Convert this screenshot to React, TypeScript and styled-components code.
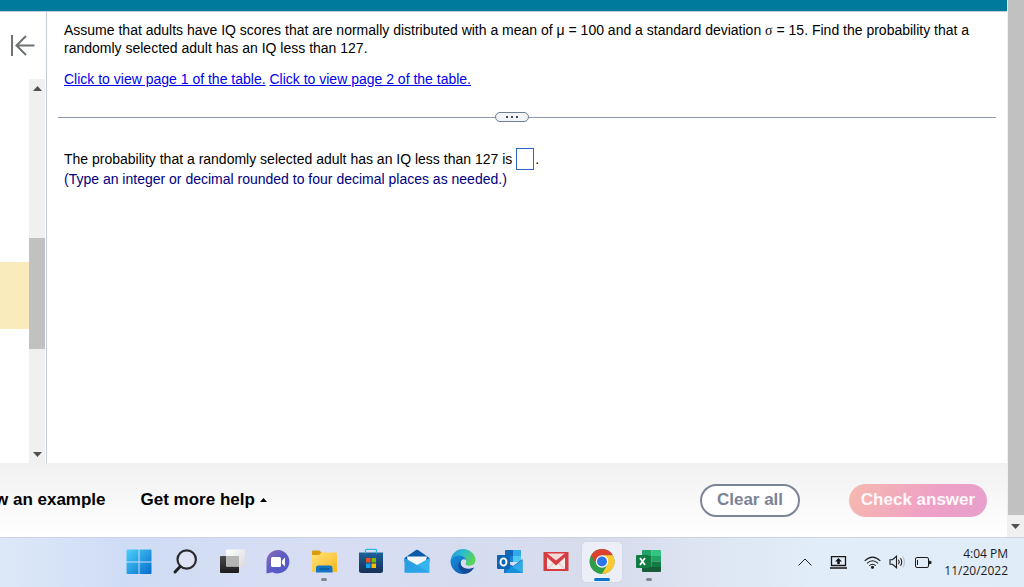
import React from "react";
import styled, { createGlobalStyle } from "styled-components";

const GlobalStyle = createGlobalStyle`
  *, *::before, *::after { box-sizing: border-box; }
  body {
    margin: 0;
    background: #fff;
    color: #000;
    font-family: "Liberation Sans", Arial, sans-serif;
    font-size: 14px;
  }
  button { font: inherit; color: inherit; padding: 0; border: 0; background: none; cursor: pointer; }
`;

const Screen = styled.div`
  display: flex;
  flex-direction: column;
  min-height: 100vh;
  overflow-x: hidden;
`;

const Browser = styled.div`
  flex: 1;
  display: flex;
`;

const Page = styled.div`
  flex: 1;
  min-width: 0;
  display: flex;
  flex-direction: column;
`;

const TopBar = styled.header`
  height: 12px;
  background: #007a9c;
  border-bottom: 1px solid #c3ccdb;
`;

const Workspace = styled.div`
  flex: 1;
  display: flex;
`;

const Rail = styled.aside`
  width: 47px;
  display: flex;
  flex-direction: column;
  border-right: 1px solid #c3ccdb;
`;

const CollapseButton = styled.button`
  height: 67px;
  padding-left: 10px;
  display: flex;
  align-items: center;
`;

const RailBody = styled.div`
  flex: 1;
  display: flex;
  padding-right: 1px;
`;

const QuestionList = styled.div`
  flex: 1;
  display: flex;
  flex-direction: column;
  padding-top: 183px;
`;

const CurrentQuestion = styled.div`
  height: 67px;
  background: #f9ebbb;
`;

const Track = styled.div<{ $width: number }>`
  width: ${(p) => p.$width}px;
  display: flex;
  flex-direction: column;
  align-items: center;
  justify-content: space-between;
  background: #f0f0f0;
`;

const Thumb = styled.div<{ $before: number; $size?: number }>`
  width: 16px;
  margin-top: ${(p) => p.$before}px;
  margin-bottom: auto;
  ${(p) => (p.$size ? `height: ${p.$size}px;` : "flex: 1; margin-bottom: 0;")}
  background: #c1c1c1;
`;

const ScrollButton = styled.button<{ $height: number }>`
  width: 100%;
  height: ${(p) => p.$height}px;
  display: flex;
  align-items: center;
  justify-content: center;
`;

const Exercise = styled.main`
  flex: 1;
  min-width: 0;
  padding: 9px 11px 0;
`;

const Block = styled.section`
  padding-left: 6px;
`;

const Paragraph = styled.p`
  margin: 0;
  line-height: 18px;
`;

const Sigma = styled.span`
  font-family: "Liberation Serif", "Times New Roman", serif;
  line-height: 1;
`;

const TableLinks = styled.p`
  margin: 12px 0 0;
  line-height: 20px;
`;

const TableLink = styled.a`
  color: #0000ee;
`;

const Divider = styled.div`
  display: flex;
  align-items: center;
  height: 10px;
  margin: 23px 0 26px;

  &::before,
  &::after {
    content: "";
    flex: 1;
    height: 1px;
    background: #8e99ac;
  }
  &::before { flex: 0 0 calc(50% - 32px); }
`;

const DividerHandle = styled.button`
  width: 34px;
  height: 10px;
  display: flex;
  align-items: center;
  justify-content: center;
  gap: 3px;
  border: 1px solid #6d7d90;
  border-radius: 5px;
  background: #f3f5f8;
`;

const Dot = styled.span`
  width: 2px;
  height: 2px;
  background: #3f4a5a;
`;

const AnswerLine = styled.label`
  display: flex;
  align-items: center;
  height: 22px;
  white-space: pre;
`;

const AnswerInput = styled.input`
  width: 18px;
  height: 22px;
  margin-right: 1px;
  padding: 0;
  border: 1px solid #2f66c4;
  border-radius: 0;
  background: #fff;
  font: inherit;
  text-align: center;
`;

const Instruction = styled.p`
  margin: 0;
  line-height: 18px;
  color: #000080;
`;

const Footer = styled.footer`
  display: flex;
  align-items: center;
  height: 74px;
  padding-right: 20px;
  background: linear-gradient(#f1f1f1, #fff);
  font-size: 17px;
  font-weight: bold;
`;

const FooterLinks = styled.div`
  display: flex;
  gap: 35px;
  margin-left: -5px;
`;

const FooterLink = styled.button`
  display: flex;
  align-items: center;
  gap: 5px;
  white-space: nowrap;
`;

const Spacer = styled.div`
  flex: 1;
`;

const Pill = styled.button<{ $primary?: boolean }>`
  height: 33px;
  border-radius: 17px;
  white-space: nowrap;
  ${(p) =>
    p.$primary
      ? `
    width: 138px;
    margin-left: 49px;
    color: #fff8fb;
    background: linear-gradient(115deg, #f5b8b0 5%, #efa0c6 60%, #e6a0cc);
  `
      : `
    width: 100px;
    color: #7b8396;
    border: 2px solid #7b8396;
    background: #fff;
  `}
`;

const Taskbar = styled.nav`
  display: flex;
  align-items: center;
  justify-content: space-between;
  height: 50px;
  padding: 0 16px 1px 116px;
  border-top: 1px solid #ccd3e2;
  background: linear-gradient(90deg, #dde9f8 0%, #cfdcf5 12%, #d7def3 30%, #d6dcf0 45%, #d8dcec 60%, #dfe8f5 72%, #e1edf8 80%, #e0ecf7 100%);
  font-family: "Open Sans", "Segoe UI", sans-serif;
  font-size: 12px;
`;

const AppStrip = styled.div`
  display: grid;
  grid-template-columns: repeat(12, 1fr);
  justify-items: center;
  width: 556px;
`;

const AppButton = styled.button<{ $active?: boolean; $mark?: boolean }>`
  width: 40px;
  height: 40px;
  display: flex;
  flex-direction: column;
  align-items: center;
  padding-top: 6px;
  border-radius: 4px;
  background: ${(p) => (p.$active ? "#eceff8" : "none")};
  box-shadow: ${(p) => (p.$active ? "0 0 1px #aab2c6" : "none")};

  &::after {
    content: "";
    width: ${(p) => (p.$active ? 16 : 6)}px;
    height: 3px;
    margin-top: 2px;
    border-radius: 2px;
    background: ${(p) => (p.$active ? "#0a74d1" : p.$mark ? "#83868f" : "transparent")};
  }
`;

const Tray = styled.div`
  display: flex;
  align-items: center;
`;

const TrayButton = styled.button<{ $gap: number }>`
  display: flex;
  margin-right: ${(p) => p.$gap}px;
`;

const Clock = styled.button`
  display: flex;
  flex-direction: column;
  align-items: flex-end;
  line-height: 17px;
  color: #1b1b1b;
`;

const Arrow = ({ up = false, color = "#505050", width = 9 }: { up?: boolean; color?: string; width?: number }) => (
  <svg width={width} height={width > 8 ? 5 : 4} viewBox="0 0 10 5" preserveAspectRatio="none" aria-hidden="true">
    <path d={up ? "M0 5L5 0L10 5Z" : "M0 0L5 5L10 0Z"} fill={color} />
  </svg>
);

const Icon = ({ children }: { children: React.ReactNode }) => (
  <svg width="28" height="28" viewBox="0 0 28 28" aria-hidden="true">
    {children}
  </svg>
);

const StartIcon = () => (
  <Icon>
    <defs>
      <linearGradient id="start" gradientUnits="userSpaceOnUse" x1="1" y1="1" x2="27" y2="27">
        <stop offset="0" stopColor="#50d3fb" />
        <stop offset="1" stopColor="#0069cc" />
      </linearGradient>
    </defs>
    <path fill="url(#start)" d="M2.500 1.500H13.500V13.500H1.500V2.500A1 1 0 0 1 2.500 1.500ZM14.500 1.500H25.500A1 1 0 0 1 26.500 2.500V13.500H14.500ZM1.500 14.500H13.500V26H2.500A1 1 0 0 1 1.500 25ZM14.500 14.500H26.500V25A1 1 0 0 1 25.500 26H14.500Z" />
  </Icon>
);

const SearchIcon = () => (
  <Icon>
    <circle cx="15.700" cy="11.500" r="9.200" fill="#e6eaf5" fillOpacity=".6" stroke="#2a2a2c" strokeWidth="2.200" />
    <path d="M9.200 18.500L4 24" stroke="#202022" strokeWidth="3" strokeLinecap="round" />
  </Icon>
);

const TaskViewIcon = () => (
  <Icon>
    <defs>
      <linearGradient id="tvDark" x2="0" y2="1">
        <stop stopColor="#4a4a4a" />
        <stop offset="1" stopColor="#1c1c1c" />
      </linearGradient>
      <linearGradient id="tvLight" x2="1" y2="1">
        <stop stopColor="#fff" />
        <stop offset="1" stopColor="#d8d9dc" />
      </linearGradient>
    </defs>
    <rect x="2" y="8" width="19" height="17" rx="1" fill="url(#tvDark)" />
    <rect x="8" y="1.500" width="19" height="17" rx="1" fill="url(#tvLight)" />
    <path d="M8 8H21V18.500H8Z" fill="#b5b5b6" />
  </Icon>
);

const ChatIcon = () => (
  <Icon>
    <defs>
      <linearGradient id="chat" x2="1" y2="1">
        <stop stopColor="#8f6db4" />
        <stop offset=".5" stopColor="#5d5bc6" />
        <stop offset="1" stopColor="#5059c9" />
      </linearGradient>
    </defs>
    <path d="M14 2A11.700 11.700 0 1 1 8.500 24.200L2.500 25.500V14A11.700 11.700 0 0 1 14 2Z" fill="url(#chat)" />
    <rect x="7" y="9" width="10" height="10" rx="1.500" fill="#fff" />
    <path d="M18 12.500L21 9.500V18.500L18 15.500Z" fill="#fff" />
  </Icon>
);

const FolderIcon = () => (
  <Icon>
    <defs>
      <linearGradient id="folder" x2="1" y2="1">
        <stop stopColor="#ffe27a" />
        <stop offset="1" stopColor="#f8b91c" />
      </linearGradient>
    </defs>
    <path d="M2 3.500A1 1 0 0 1 3 2.500H9.500L12 5V10H2Z" fill="#dd9c0c" />
    <path d="M2 7H9L11.500 4.500H26A1 1 0 0 1 27 5.500V24H2Z" fill="url(#folder)" />
    <path d="M6 24.500V20A2.500 2.500 0 0 1 8.500 17.500H20A2.500 2.500 0 0 1 22.500 20V24.500Z" fill="#1474c4" />
    <path d="M9.500 21H19" stroke="#0b4e8d" strokeWidth="1" />
  </Icon>
);

const StoreIcon = () => (
  <Icon>
    <defs>
      <linearGradient id="store" x2="0" y2="1">
        <stop stopColor="#1b619a" />
        <stop offset="1" stopColor="#173057" />
      </linearGradient>
    </defs>
    <path d="M2 4.500H26V22.500A2.500 2.500 0 0 1 23.500 25H4.500A2.500 2.500 0 0 1 2 22.500Z" fill="url(#store)" />
    <path d="M8.500 5.500V2.200A.8.800 0 0 1 9.300 1.400H18.700A.8.800 0 0 1 19.500 2.200V5.500" fill="none" stroke="#30b7ea" strokeWidth="1.300" />
    <path d="M9 10H13.500V14.500H9Z" fill="#f25022" />
    <path d="M14.500 10H19V14.500H14.500Z" fill="#7fba00" />
    <path d="M9 15.500H13.500V20H9Z" fill="#10a5ee" />
    <path d="M14.500 15.500H19V20H14.500Z" fill="#ffb900" />
  </Icon>
);

const MailIcon = () => (
  <Icon>
    <path d="M1.500 10L13 2A2 2 0 0 1 15 2L26.500 10V14H1.500Z" fill="#0a5aa8" />
    <path d="M4 8.500H24L22 16L14 19L5 15Z" fill="#f5f7fb" />
    <path d="M1.500 10L14 17L26.500 24.500H1.500Z" fill="#2a9fe4" />
    <path d="M26.500 10L14 17L1.500 24.500H26.500Z" fill="#35b5f0" />
    <path d="M14 17L26.500 24.500H1.500Z" fill="#1b8cd8" fillOpacity=".4" />
  </Icon>
);

const EdgeIcon = () => (
  <Icon>
    <defs>
      <linearGradient id="edgeTop" x2="1" y2=".4">
        <stop stopColor="#2493df" />
        <stop offset=".5" stopColor="#2bbccc" />
        <stop offset="1" stopColor="#5bd35c" />
      </linearGradient>
      <linearGradient id="edgeSide" x2=".7" y2="1">
        <stop stopColor="#1690df" />
        <stop offset="1" stopColor="#0c5fb2" />
      </linearGradient>
    </defs>
    <path d="M1.500 12.500C3 8 6.500 7 10 7C14 7 17 9.500 17.300 12C13 9.500 10.500 14 12 17.500C13.500 21.500 20 22 25 19.500C22.500 24 18.500 26 14 26C7 26 1.200 20 1.500 12.500Z" fill="url(#edgeSide)" />
    <path d="M1.600 12.500C2.500 5.500 7.700 1 14 1C21 1 26.500 6.500 26.500 12C26.500 16 23.500 17.700 20.500 17.700C17.500 17.700 16 16.500 16.800 15.200C18.500 12 15.500 7.500 10 7.500C6 7.500 3 9.500 1.600 12.500Z" fill="url(#edgeTop)" />
    <path d="M11.500 12C7 17 10 24.500 17 25.500C20.500 24.700 23.500 22.500 25 19.500C20 22 13.500 20.500 12 17C11.200 15 11.300 13.500 11.500 12Z" fill="#154b96" />
  </Icon>
);

const OutlookIcon = () => (
  <Icon>
    <path d="M9 3A1 1 0 0 1 10 2H25V14H9Z" fill="#1067b5" />
    <path d="M17 2H25V8H17Z" fill="#31a8ea" />
    <path d="M9 8H17V14H9Z" fill="#1682d2" />
    <path d="M17 8H25V14H17Z" fill="#50c8f2" />
    <path d="M8 13L17 18L26.500 11V25H8Z" fill="#1c75c4" />
    <path d="M26.500 12V25H10L18 18Z" fill="#30a9e8" />
    <path d="M14 18L26.500 25H10Z" fill="#1790dc" />
    <rect x="1" y="7" width="13" height="14" rx="1" fill="#0b65b6" />
    <ellipse cx="7.500" cy="14" rx="3" ry="3.600" fill="none" stroke="#fff" strokeWidth="1.900" />
  </Icon>
);

const GmailIcon = () => (
  <Icon>
    <rect x="1.500" y="4" width="25" height="19" fill="#d53d41" />
    <path d="M5 7.500L14 16L23 7.500V21H5Z" fill="#f5eded" />
    <path d="M5.500 21L11.500 15M22.500 21L16.500 15" stroke="#e5aeb0" strokeWidth="1" />
    <path d="M5 5.500H23L14 12.500Z" fill="#f3d9da" />
    <path d="M3 5.500L14 15.500L25 5.500" fill="none" stroke="#d53d41" strokeWidth="3" />
  </Icon>
);

const ChromeIcon = () => (
  <Icon>
    <circle cx="14" cy="13.500" r="12.500" fill="#2e9e4c" />
    <path d="M3.200 7.200A12.500 12.500 0 0 1 24.900 7.200H14L8.600 16.600Z" fill="#de4032" />
    <path d="M24.900 7.200A12.500 12.500 0 0 1 14 26L19.400 16.600L14 7.200Z" fill="#fcc934" />
    <circle cx="14" cy="13.500" r="6.200" fill="#fff" />
    <circle cx="14" cy="13.500" r="5" fill="#2b76e8" />
  </Icon>
);

const ExcelIcon = () => (
  <Icon>
    <path d="M7 3A1 1 0 0 1 8 2H16.500V9H7Z" fill="#21a366" />
    <path d="M16.500 2H25A1 1 0 0 1 26 3V8H16.500Z" fill="#33c481" />
    <path d="M7 8H16.500V19H7Z" fill="#107c41" />
    <path d="M16.500 8H26V13.500H16.500Z" fill="#21a366" />
    <path d="M16.500 13.500H26V19H16.500Z" fill="#107c41" />
    <path d="M7 19H26V23A1 1 0 0 1 25 24H8A1 1 0 0 1 7 23Z" fill="#185c37" />
    <rect x="1" y="7" width="13" height="13" rx="1" fill="#107c41" />
    <path d="M5 10L10 17M10 10L5 17" stroke="#fff" strokeWidth="1.800" />
  </Icon>
);

const apps: { name: string; icon: React.ReactNode; active?: boolean; mark?: boolean }[] = [
  { name: "Start", icon: <StartIcon /> },
  { name: "Search", icon: <SearchIcon /> },
  { name: "Task view", icon: <TaskViewIcon /> },
  { name: "Chat", icon: <ChatIcon /> },
  { name: "File Explorer", icon: <FolderIcon />, mark: true },
  { name: "Microsoft Store", icon: <StoreIcon /> },
  { name: "Mail", icon: <MailIcon /> },
  { name: "Edge", icon: <EdgeIcon /> },
  { name: "Outlook", icon: <OutlookIcon /> },
  { name: "Gmail", icon: <GmailIcon /> },
  { name: "Chrome", icon: <ChromeIcon />, active: true },
  { name: "Excel", icon: <ExcelIcon />, mark: true },
];

export default function App() {
  return (
    <Screen>
      <GlobalStyle />
      <Browser>
        <Page>
          <TopBar />
          <Workspace>
            <Rail>
              <CollapseButton aria-label="Collapse question list">
                <svg width="25" height="22" viewBox="0 0 25 22" fill="none" stroke="#6d7373" strokeWidth="2" aria-hidden="true">
                  <path d="M2 0V21M6 10.500H24.500M16 1L6.500 10.500L16 20" />
                </svg>
              </CollapseButton>
              <RailBody>
                <QuestionList>
                  <CurrentQuestion />
                </QuestionList>
                <Track $width={16}>
                  <ScrollButton $height={18} aria-label="Scroll list up"><Arrow up /></ScrollButton>
                  <Thumb $before={141} $size={111} />
                  <ScrollButton $height={18} aria-label="Scroll list down"><Arrow /></ScrollButton>
                </Track>
              </RailBody>
            </Rail>
            <Exercise>
              <Block>
                <Paragraph>
                  Assume that adults have IQ scores that are normally distributed with a mean of μ = 100 and a standard
                  deviation <Sigma>σ</Sigma> = 15. Find the probability that a randomly selected adult has an IQ less than 127.
                </Paragraph>
                <TableLinks>
                  <TableLink href="#page-1">Click to view page 1 of the table.</TableLink>{" "}
                  <TableLink href="#page-2">Click to view page 2 of the table.</TableLink>
                </TableLinks>
              </Block>
              <Divider>
                <DividerHandle aria-label="Resize panels"><Dot /><Dot /><Dot /></DividerHandle>
              </Divider>
              <Block>
                <AnswerLine>
                  {"The probability that a randomly selected adult has an IQ less than 127 is "}
                  <AnswerInput type="text" />.
                </AnswerLine>
                <Instruction>(Type an integer or decimal rounded to four decimal places as needed.)</Instruction>
              </Block>
            </Exercise>
          </Workspace>
          <Footer>
            <FooterLinks>
              <FooterLink>w an example</FooterLink>
              <FooterLink>Get more help <Arrow up color="#000" width={7} /></FooterLink>
            </FooterLinks>
            <Spacer />
            <Pill>Clear all</Pill>
            <Pill $primary>Check answer</Pill>
          </Footer>
        </Page>
        <Track $width={17}>
          <Thumb $before={0} />
          <ScrollButton $height={22} aria-label="Scroll page down"><Arrow /></ScrollButton>
        </Track>
      </Browser>
      <Taskbar>
        <AppStrip>
          {apps.map((app) => (
            <AppButton key={app.name} aria-label={app.name} $active={app.active} $mark={app.mark}>
              {app.icon}
            </AppButton>
          ))}
        </AppStrip>
        <Tray>
          <TrayButton $gap={18} aria-label="Show hidden icons">
            <svg width="14" height="8" viewBox="0 0 14 8" fill="none" stroke="#222"><path d="M.5 7.500L7 1L13.500 7.500" /></svg>
          </TrayButton>
          <TrayButton $gap={17} aria-label="Update">
            <svg width="17" height="13" viewBox="0 0 17 13" fill="none" stroke="#161616">
              <path d="M1.500 .5H15.500V9.500H1.500ZM0 12H17" strokeWidth="1.300" />
              <path d="M8.500 2L12 5.500H9.800V8H7.200V5.500H5Z" fill="#161616" stroke="none" />
            </svg>
          </TrayButton>
          <TrayButton $gap={8} aria-label="Wi-Fi">
            <svg width="17" height="13" viewBox="0 0 17 13" fill="none" stroke="#1d1d1d" strokeWidth="1.100">
              <path d="M.7 4.800Q8.500 -2.700 16.300 4.800M3 7.300Q8.500 2.200 14 7.300M5.300 9.600Q8.500 6.800 11.700 9.600" />
              <circle cx="8.500" cy="11.200" r="1" fill="#1d1d1d" />
            </svg>
          </TrayButton>
          <TrayButton $gap={9} aria-label="Volume">
            <svg width="17" height="14" viewBox="0 0 17 14" fill="none" stroke="#1d1d1d" strokeWidth="1.100">
              <path d="M1 4.700H3.500L7.500 1.300V12.700L3.500 9.300H1Z" />
              <path d="M9.500 4.800Q11 7 9.500 9.200M11.500 3.200Q14 7 11.500 10.800" />
              <path d="M13.700 1.500Q17.300 7 13.700 12.500" stroke="#b9c2cc" />
            </svg>
          </TrayButton>
          <TrayButton $gap={12} aria-label="Battery">
            <svg width="17" height="11" viewBox="0 0 17 11" fill="none" stroke="#1d1d1d">
              <rect x=".5" y=".5" width="13" height="10" rx="1.500" />
              <path d="M2.500 3V8" />
              <path d="M14 3.500L16.500 4.500V6.500L14 7.500Z" fill="#1d1d1d" stroke="none" />
            </svg>
          </TrayButton>
          <Clock>
            <span>4:04 PM</span>
            <span>11/20/2022</span>
          </Clock>
        </Tray>
      </Taskbar>
    </Screen>
  );
}
